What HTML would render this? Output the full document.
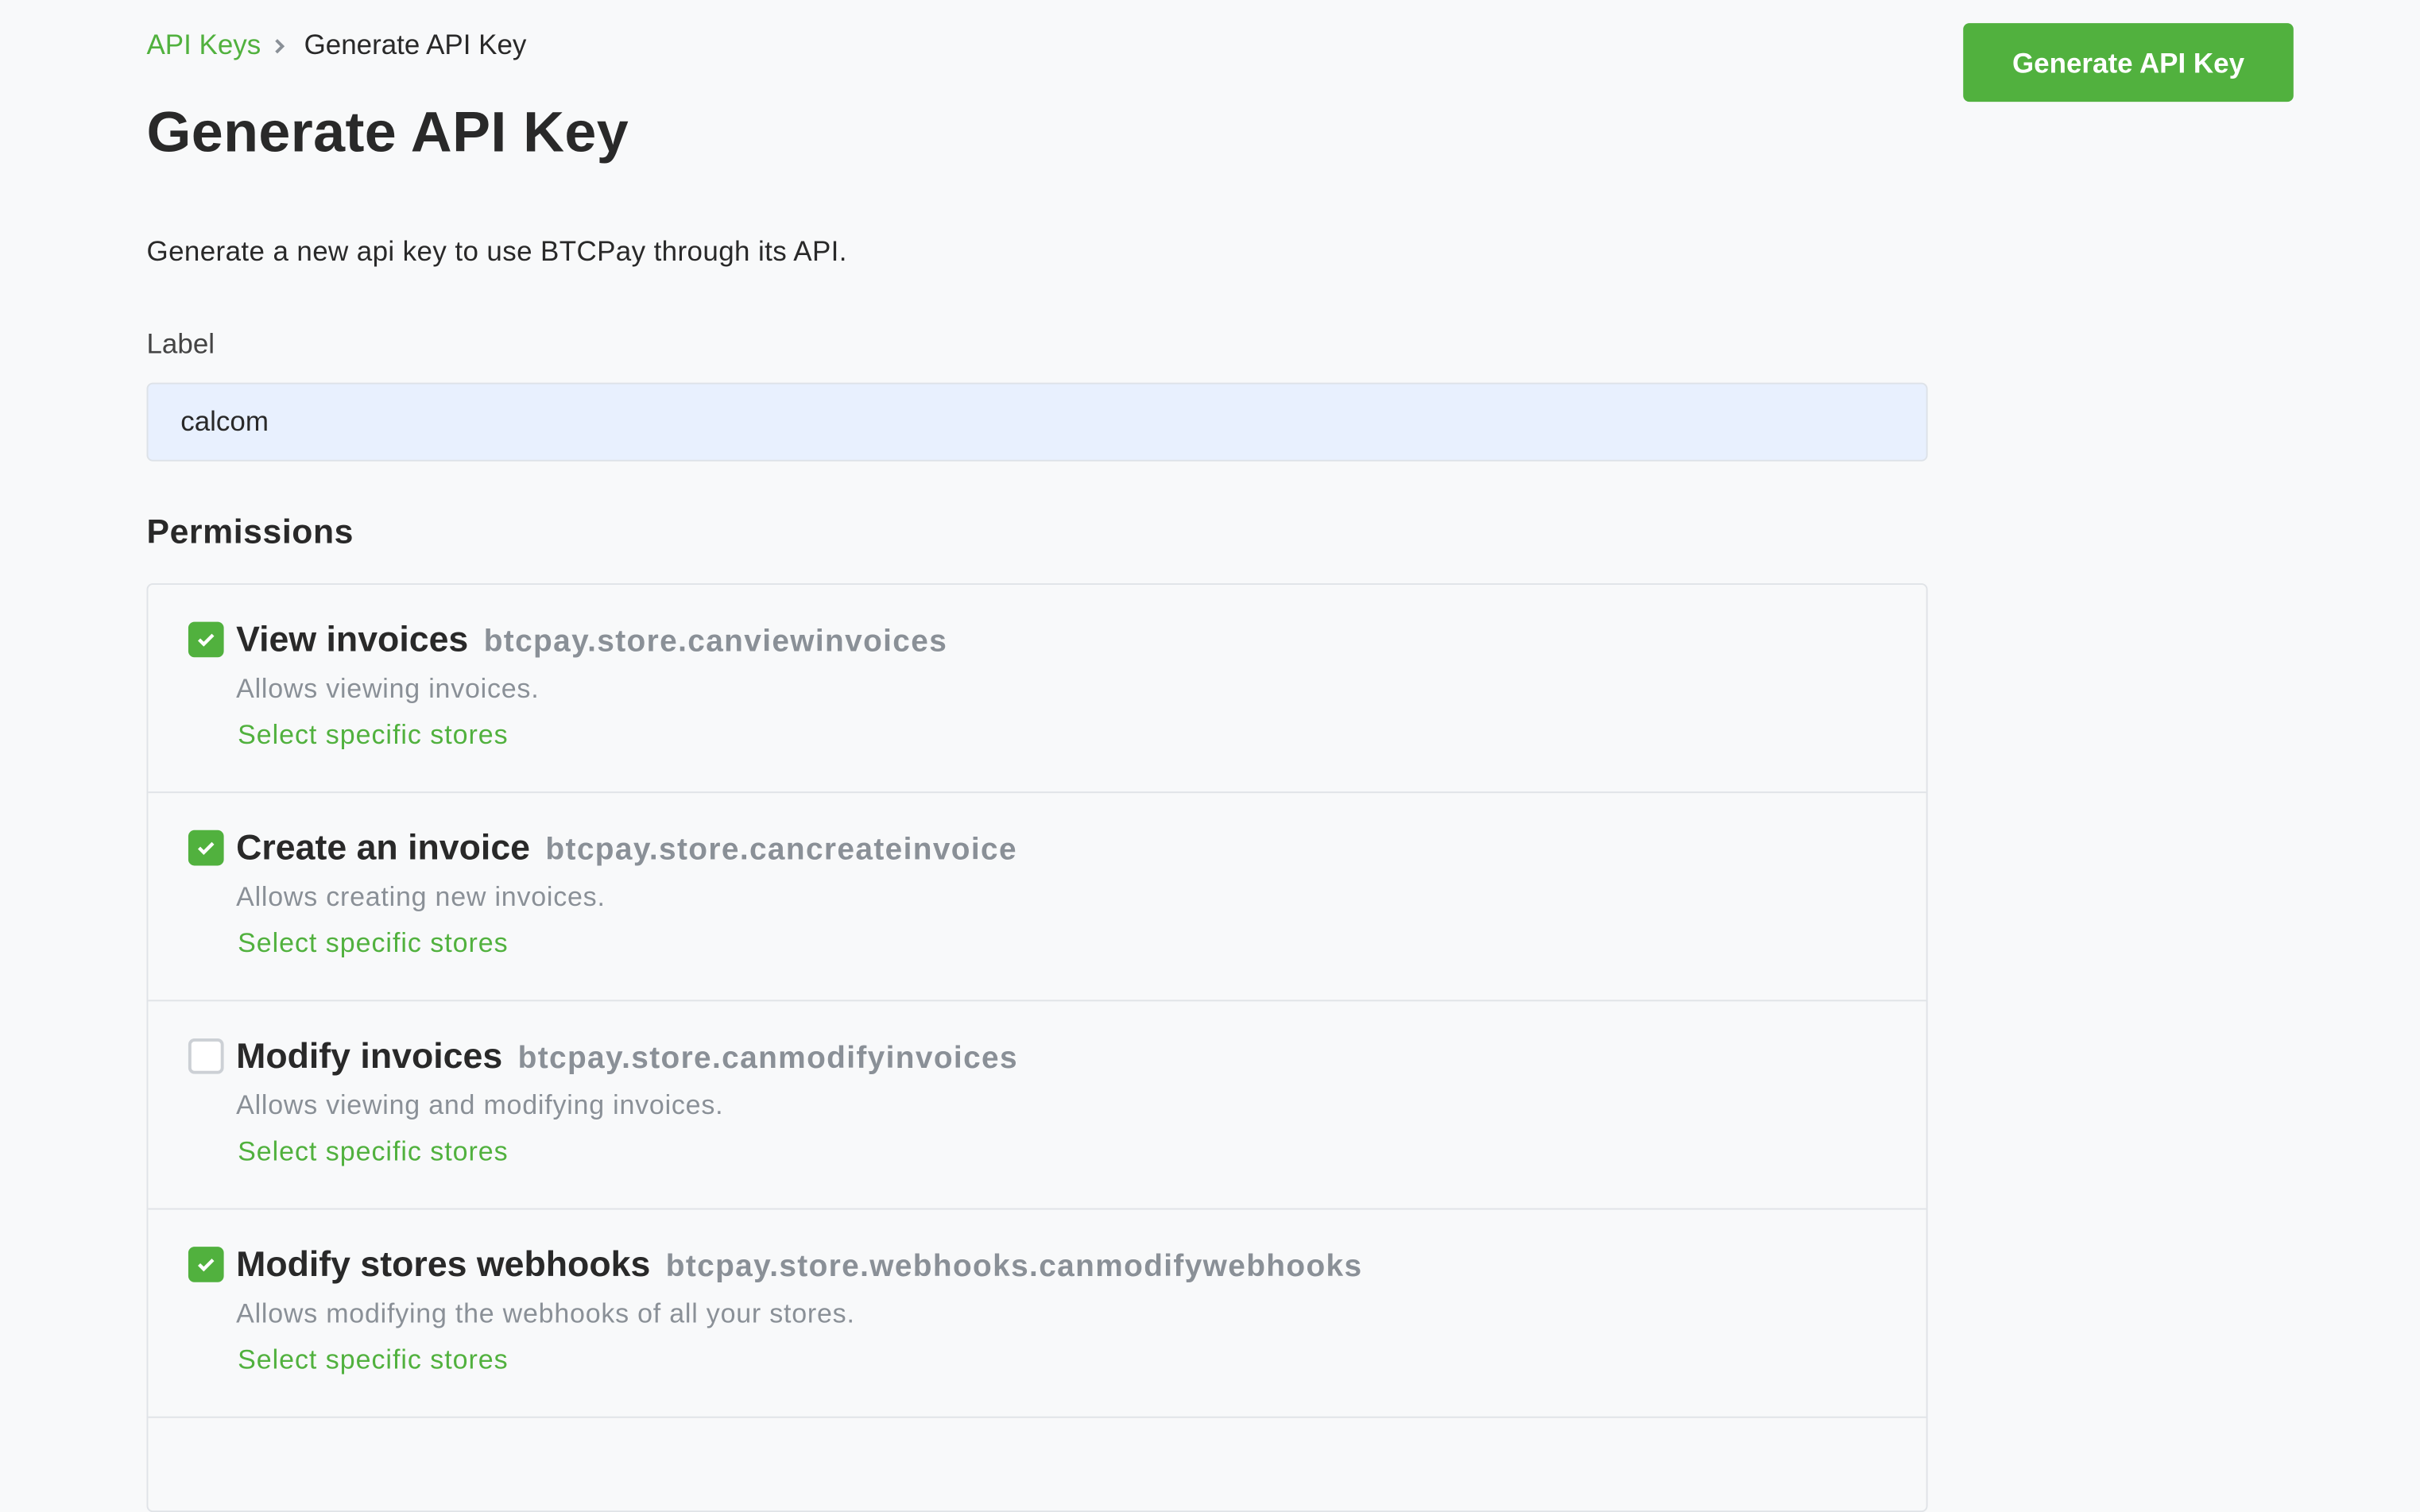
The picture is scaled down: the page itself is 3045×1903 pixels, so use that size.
<!DOCTYPE html>
<html><head><style>
html,body{margin:0;padding:0;background:#f8f9fa;overflow:hidden}
body{width:3045px;height:1800px}
#w{position:absolute;left:0;top:0;width:1568px;height:927px;transform:scale(1.942);transform-origin:0 0;font-family:"Liberation Sans",sans-serif;color:#292929}
.a{position:absolute;white-space:nowrap}
.g{color:#51b13e}
.box{position:absolute;left:95px;top:378px;width:1152px;height:600px;border:1px solid #e0e3e7;border-radius:4px}
.it{position:absolute;left:0;width:1152px;height:134px;border-bottom:1px solid #e0e3e7}
.cb{position:absolute;left:26px;top:24px;width:23px;height:23px;border-radius:4px;background:#51b13e}
.cb.off{background:#fff;border:2px solid #ccd0d5;width:19px;height:19px}
.t{position:absolute;left:57px;top:22px;font-size:23px;font-weight:bold;white-space:nowrap;color:#292929;letter-spacing:0px}
.t span{color:#8a9097;font-size:20px;margin-left:10px;letter-spacing:0.7px}
.d{position:absolute;left:57px;top:57px;font-size:17.5px;color:#8a9097;white-space:nowrap;letter-spacing:0.4px}
.l{position:absolute;left:58px;top:87px;font-size:17.5px;color:#51b13e;white-space:nowrap;letter-spacing:0.5px}
</style></head><body><div id="w">
<div class="a g" style="left:95px;top:19px;font-size:18px">API Keys</div>
<svg class="a" style="left:176px;top:24px" width="10" height="12" viewBox="0 0 10 12"><path d="M3 2l4 4-4 4" stroke="#8a9097" stroke-width="2" fill="none"/></svg>
<div class="a" style="left:197px;top:19px;font-size:18px">Generate API Key</div>
<div class="a" style="left:95px;top:65px;font-size:37px;font-weight:bold;letter-spacing:0.2px">Generate API Key</div>
<div class="a" style="left:95px;top:153px;font-size:18px;letter-spacing:0.2px">Generate a new api key to use BTCPay through its API.</div>
<div class="a" style="left:95px;top:213px;font-size:18px;color:#444">Label</div>
<div class="a" style="left:95px;top:248px;width:1152px;height:49px;background:#e8f0fe;border:1px solid #dde2e8;border-radius:4px"></div>
<div class="a" style="left:117px;top:263px;font-size:18px">calcom</div>
<div class="a" style="left:95px;top:332px;font-size:22px;font-weight:bold;letter-spacing:0.3px">Permissions</div>
<div class="box">
<div class="it" style="top:0"><div class="cb"><svg width="23" height="23"><path d="M7 11.5l3 3 6-6" stroke="#fff" stroke-width="2.2" fill="none"/></svg></div><div class="t">View invoices<span>btcpay.store.canviewinvoices</span></div><div class="d">Allows viewing invoices.</div><div class="l">Select specific stores</div></div>
<div class="it" style="top:135px"><div class="cb"><svg width="23" height="23"><path d="M7 11.5l3 3 6-6" stroke="#fff" stroke-width="2.2" fill="none"/></svg></div><div class="t">Create an invoice<span>btcpay.store.cancreateinvoice</span></div><div class="d">Allows creating new invoices.</div><div class="l">Select specific stores</div></div>
<div class="it" style="top:270px"><div class="cb off"></div><div class="t">Modify invoices<span>btcpay.store.canmodifyinvoices</span></div><div class="d">Allows viewing and modifying invoices.</div><div class="l">Select specific stores</div></div>
<div class="it" style="top:405px"><div class="cb"><svg width="23" height="23"><path d="M7 11.5l3 3 6-6" stroke="#fff" stroke-width="2.2" fill="none"/></svg></div><div class="t">Modify stores webhooks<span>btcpay.store.webhooks.canmodifywebhooks</span></div><div class="d">Allows modifying the webhooks of all your stores.</div><div class="l">Select specific stores</div></div>
</div>
<div class="a" style="left:1272px;top:15px;width:214px;height:51px;background:#51b13e;border-radius:4px;color:#fff;font-size:18px;font-weight:bold;text-align:center;line-height:53px">Generate API Key</div>
</div></body></html>
